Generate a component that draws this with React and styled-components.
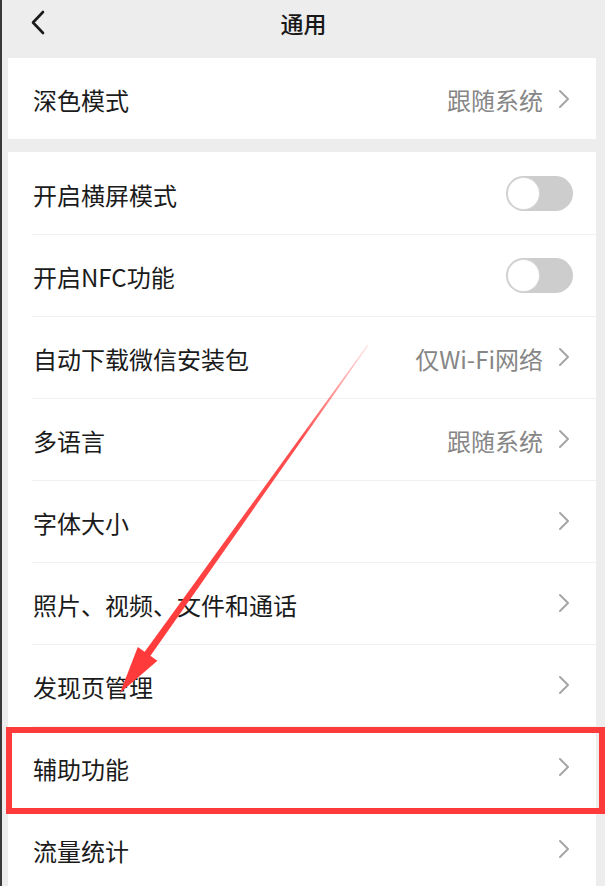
import React from "react";
import styled, { createGlobalStyle } from "styled-components";

const Global = createGlobalStyle`
  html, body { margin: 0; padding: 0; background: #ededed; }
  body { font-family: "Noto Sans CJK SC", "Noto Sans", "Liberation Sans", sans-serif; overflow: hidden; }
  * { box-sizing: border-box; }
`;

const Page = styled.div`
  position: relative;
  width: 605px;
  height: 886px;
  overflow: hidden;
  background: #ededed;
  border-left: 2px solid #3a3a3a;
  display: flex;
  flex-direction: column;
  & > * { flex-shrink: 0; }
`;

const Header = styled.header`
  height: 58px;
  display: grid;
  grid-template-columns: 60px 1fr 60px;
  align-items: start;
  padding-top: 8px;
`;

const Back = styled.div`
  display: flex;
  padding: 2px 0 0 28px;
`;

const Title = styled.h1`
  margin: 0;
  text-align: center;
  font-size: 23px;
  line-height: 30px;
  font-weight: 500;
  color: #181818;
`;

const Card = styled.section`
  margin: 0 9px 0 6px;
  background: #fff;
  margin-top: ${(p) => p.$gap || 0}px;
  display: flex;
  flex-direction: column;
  & > * { flex-shrink: 0; }
`;

const Row = styled.div`
  position: relative;
  height: ${(p) => p.$h || 82}px;
  display: flex;
  align-items: center;
  padding: 0 26px 0 25px;
  padding-right: ${(p) => (p.$toggle ? 23 : 26)}px;
  &:not(:first-child)::before {
    content: "";
    position: absolute;
    top: 0;
    left: 24px;
    right: 0;
    height: 1px;
    background: #f1f1f1;
  }
`;

const Label = styled.span`
  flex: 1;
  font-size: 24px;
  color: #1b1b1b;
  line-height: 1;
  padding-top: 3px;
`;

const Value = styled.span`
  font-size: 24px;
  color: #868686;
  line-height: 1;
  padding-top: 3px;
  margin-right: 15px;
`;

const Switch = styled.div`
  width: 67px;
  height: 35px;
  border-radius: 18px;
  background: #cdcdcd;
  padding: 2px;
  display: flex;
  align-items: center;
  margin-top: 1px;
`;

const Knob = styled.div`
  width: 31px;
  height: 31px;
  border-radius: 50%;
  background: #fff;
  box-shadow: 0 0 0 1px #d6d6d6;
`;

const Highlight = styled.div`
  position: absolute;
  left: -2px;
  right: -9px;
  top: 1px;
  bottom: -6px;
  border: 6px solid #ff3a3a;
  pointer-events: none;
  z-index: 2;
`;

const Overlay = styled.svg`
  position: absolute;
  left: -2px;
  top: 0;
  width: 605px;
  height: 886px;
  pointer-events: none;
  z-index: 3;
`;

const Chevron = () => (
  <svg width="12" height="20" viewBox="0 0 12 20">
    <polyline points="2,2 10,10 2,18" fill="none" stroke="#a6a6a6" strokeWidth="2" strokeLinecap="round" strokeLinejoin="round" />
  </svg>
);

const BackIcon = () => (
  <svg width="15" height="25" viewBox="0 0 15 25">
    <polyline points="13,2 3,12.5 13,23" fill="none" stroke="#1a1a1a" strokeWidth="2.6" strokeLinecap="round" strokeLinejoin="round" />
  </svg>
);

const rows = [
  { label: "开启横屏模式", toggle: true },
  { label: "开启NFC功能", toggle: true },
  { label: "自动下载微信安装包", value: "仅Wi-Fi网络" },
  { label: "多语言", value: "跟随系统" },
  { label: "字体大小" },
  { label: "照片、视频、文件和通话" },
  { label: "发现页管理" },
  { label: "辅助功能", highlight: true },
  { label: "流量统计" },
];

export default function App() {
  return (
    <>
      <Global />
      <Page>
        <Header>
          <Back>
            <BackIcon />
          </Back>
          <Title>通用</Title>
          <span />
        </Header>
        <Card>
          <Row $h={81}>
            <Label>深色模式</Label>
            <Value>跟随系统</Value>
            <Chevron />
          </Row>
        </Card>
        <Card $gap={13}>
          {rows.map((r) => (
            <Row key={r.label} $toggle={r.toggle}>
              <Label>{r.label}</Label>
              {r.value && <Value>{r.value}</Value>}
              {r.toggle ? (
                <Switch>
                  <Knob />
                </Switch>
              ) : (
                <Chevron />
              )}
              {r.highlight && <Highlight />}
            </Row>
          ))}
        </Card>
        <Overlay viewBox="0 0 605 886">
          <defs>
            <linearGradient id="fade" x1="368" y1="345" x2="146" y2="656" gradientUnits="userSpaceOnUse">
              <stop offset="0" stopColor="#ff3a3a" stopOpacity="0.15" />
              <stop offset="0.3" stopColor="#ff3a3a" stopOpacity="0.9" />
              <stop offset="1" stopColor="#ff3a3a" stopOpacity="1" />
            </linearGradient>
          </defs>
          <polygon points="368.5,345.3 367.5,344.7 143.1,654.0 148.9,658.0" fill="url(#fade)" />
          <polygon points="120,693 157.4,660.7 137.8,646.9" fill="#ff3a3a" />
        </Overlay>
      </Page>
    </>
  );
}
